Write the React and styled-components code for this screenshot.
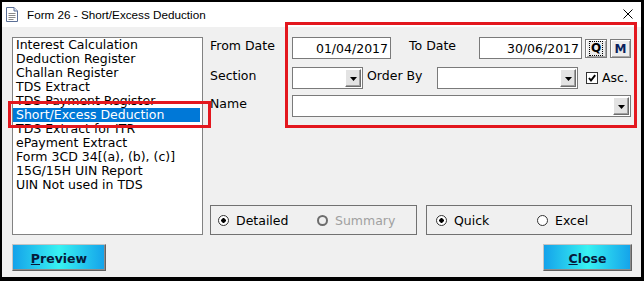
import React from "react";
import styled, { createGlobalStyle } from "styled-components";

const GlobalStyle = createGlobalStyle`
  html, body {
    margin: 0;
    padding: 0;
    background: #000;
  }
  body {
    font-family: "DejaVu Sans", Verdana, sans-serif;
    font-size: 12.5px;
    color: #000;
  }
`;

const reports = [
  "Interest Calculation",
  "Deduction Register",
  "Challan Register",
  "TDS Extract",
  "TDS Payment Register",
  "Short/Excess Deduction",
  "TDS Extract for ITR",
  "ePayment Extract",
  "Form 3CD 34[(a), (b), (c)]",
  "15G/15H UIN Report",
  "UIN Not used in TDS",
];

const DocIcon = () => (
  <svg width="12" height="15" viewBox="0 0 12 15">
    <path d="M0.5 0.5 H8 L11.5 4 V14.5 H0.5 Z" fill="#fff" stroke="#5b6f96" />
    <path d="M8 0.5 V4 H11.5" fill="#dfe6f2" stroke="#5b6f96" />
    <path d="M2.5 6.5 H9.5 M2.5 8.5 H9.5 M2.5 10.5 H9.5 M2.5 12.5 H7.5" stroke="#8a8a8a" />
  </svg>
);

const CloseIcon = () => (
  <svg width="10" height="10" viewBox="0 0 10 10">
    <path d="M0.5 0.5 L9.5 9.5 M9.5 0.5 L0.5 9.5" stroke="#000" strokeWidth="1" />
  </svg>
);

const Arrow = () => (
  <svg width="7" height="4" viewBox="0 0 7 4">
    <path d="M0 0 H7 L3.5 4 Z" fill="#000" />
  </svg>
);

const Tick = () => (
  <svg width="10" height="10" viewBox="0 0 10 10">
    <path d="M2 5 L4 7.5 L8.2 2.2" fill="none" stroke="#000" strokeWidth="2" />
  </svg>
);

export default function App() {
  return (
    <>
      <GlobalStyle />
      <Window>
        <TitleBar>
          <DocIcon />
          <Title>Form 26 - Short/Excess Deduction</Title>
          <CloseBox>
            <CloseIcon />
          </CloseBox>
        </TitleBar>

        <Body>
          <Main>
            <ReportList>
              {reports.map((r) => (
                <ReportItem key={r} $selected={r === "Short/Excess Deduction"}>
                  {r}
                </ReportItem>
              ))}
            </ReportList>

            <Options>
              <Fields>
                <FieldRow>
                  <Label $width={82}>From Date</Label>
                  <TextBox $width={99} value="01/04/2017" readOnly />
                  <Label $width={70} $gap={18}>To Date</Label>
                  <TextBox $width={103} value="30/06/2017" readOnly />
                  <SmallButton $width={22} $gap={3}>
                    <Focus>Q</Focus>
                  </SmallButton>
                  <SmallButton $width={21} $gap={3} $color="#0b1f5c">
                    M
                  </SmallButton>
                </FieldRow>

                <FieldRow $top={8}>
                  <Label $width={82}>Section</Label>
                  <Combo $width={71}>
                    <DropButton>
                      <Arrow />
                    </DropButton>
                  </Combo>
                  <Label $width={70} $gap={4}>Order By</Label>
                  <Combo $width={141}>
                    <DropButton>
                      <Arrow />
                    </DropButton>
                  </Combo>
                  <Check>
                    <Tick />
                  </Check>
                  <CheckLabel>Asc.</CheckLabel>
                </FieldRow>

                <FieldRow $top={6}>
                  <Label $width={82}>Name</Label>
                  <Combo $width={339}>
                    <DropButton>
                      <Arrow />
                    </DropButton>
                  </Combo>
                </FieldRow>
              </Fields>

              <Groups>
                <GroupBox $width={207} $pad={7}>
                  <Option $width={99}>
                    <Radio $checked />
                    Detailed
                  </Option>
                  <Option $disabled>
                    <Radio $disabled />
                    Summary
                  </Option>
                </GroupBox>
                <GroupBox $width={206} $pad={9}>
                  <Option $width={101}>
                    <Radio $checked />
                    Quick
                  </Option>
                  <Option>
                    <Radio />
                    Excel
                  </Option>
                </GroupBox>
              </Groups>
            </Options>
          </Main>

          <ButtonRow>
            <ActionButton $width={94}>
              <u>P</u>review
            </ActionButton>
            <ActionButton $width={89}>
              <u>C</u>lose
            </ActionButton>
          </ButtonRow>
        </Body>

        <Marker $left={8} $top={101} $width={203} $height={27} />
        <Marker $left={285} $top={22} $width={352} $height={106} />
      </Window>
    </>
  );
}

const Window = styled.div`
  position: relative;
  box-sizing: border-box;
  width: 644px;
  height: 281px;
  border-style: solid;
  border-color: #000;
  border-width: 2px 3px 4px 2px;
  background: #f0f0f0;
  display: flex;
  flex-direction: column;
`;

const TitleBar = styled.div`
  height: 25px;
  background: #fff;
  display: flex;
  align-items: center;
  padding-left: 4px;
`;

const Title = styled.span`
  margin-left: 9px;
  font-family: "Liberation Sans", Arial, sans-serif;
  font-size: 11.7px;
  color: #000;
`;

const CloseBox = styled.span`
  display: flex;
  margin-left: auto;
  margin-right: 8px;
  margin-top: -2px;
`;

const Body = styled.div`
  flex: 1;
  padding: 10px 9px 6px 10px;
  display: flex;
  flex-direction: column;
`;

const Main = styled.div`
  display: grid;
  grid-template-columns: 191px 1fr;
  column-gap: 7px;
  height: 198px;
`;

const ReportList = styled.div`
  box-sizing: border-box;
  border: 1px solid #828282;
  background: #fff;
  padding-right: 2px;
  overflow: hidden;
`;

const ReportItem = styled.div`
  height: 14px;
  line-height: 14px;
  padding-left: 3px;
  white-space: nowrap;
  background: ${(p) => (p.$selected ? "#0078d7" : "transparent")};
  color: ${(p) => (p.$selected ? "#fff" : "#000")};
`;

const Options = styled.div`
  display: flex;
  flex-direction: column;
  justify-content: space-between;
`;

const Fields = styled.div`
  display: flex;
  flex-direction: column;
`;

const FieldRow = styled.div`
  display: flex;
  align-items: flex-start;
  height: 22px;
  margin-top: ${(p) => p.$top || 0}px;
`;

const Label = styled.span`
  width: ${(p) => p.$width}px;
  margin-left: ${(p) => p.$gap || 0}px;
  flex-shrink: 0;
  padding-top: 2px;
  line-height: 14px;
  white-space: nowrap;
`;

const TextBox = styled.input`
  box-sizing: border-box;
  width: ${(p) => p.$width}px;
  height: 22px;
  margin: 0;
  padding: 0 2px 0 0;
  border: 1px solid #7a7a7a;
  background: #fff;
  font-family: "DejaVu Sans", Verdana, sans-serif;
  font-size: 12.5px;
  color: #000;
  text-align: right;
  outline: none;
`;

const SmallButton = styled.div`
  box-sizing: border-box;
  width: ${(p) => p.$width}px;
  height: 19px;
  margin-top: 2px;
  margin-left: ${(p) => p.$gap}px;
  border: 1px solid #7c7c7c;
  background: #ececec;
  box-shadow: inset 1px 1px #fff, inset -1px -1px #a8a8a8;
  display: flex;
  align-items: center;
  justify-content: center;
  font-weight: bold;
  font-size: 12px;
  color: ${(p) => p.$color || "#000"};
`;

const Focus = styled.span`
  outline: 1px dotted #000;
  padding: 0 1px;
  line-height: 13px;
`;

const Combo = styled.div`
  box-sizing: border-box;
  width: ${(p) => p.$width}px;
  height: 22px;
  border: 1px solid #7a7a7a;
  background: #fff;
  padding: 1px;
  display: flex;
  justify-content: flex-end;
  flex-shrink: 0;
`;

const DropButton = styled.div`
  box-sizing: border-box;
  width: 16px;
  height: 18px;
  background: #e3e3e3;
  border: 1px solid;
  border-color: #fff #6d6d6d #6d6d6d #fff;
  box-shadow: inset -1px -1px #a0a0a0;
  display: flex;
  align-items: center;
  justify-content: center;
  padding-top: 2px;
`;

const Check = styled.div`
  box-sizing: border-box;
  width: 12px;
  height: 12px;
  margin: 5px 0 0 8px;
  border: 1px solid #333;
  background: #fff;
  display: flex;
  align-items: center;
  justify-content: center;
`;

const CheckLabel = styled.span`
  margin-left: 4px;
  padding-top: 4px;
  line-height: 14px;
`;

const Groups = styled.div`
  display: flex;
  gap: 9px;
`;

const GroupBox = styled.div`
  box-sizing: border-box;
  width: ${(p) => p.$width}px;
  height: 30px;
  border: 1px solid #717171;
  padding-left: ${(p) => p.$pad}px;
  display: flex;
  align-items: center;
`;

const Option = styled.label`
  display: flex;
  align-items: center;
  gap: 7px;
  width: ${(p) => (p.$width ? `${p.$width}px` : "auto")};
  color: ${(p) => (p.$disabled ? "#a0a0a0" : "#000")};
`;

const Radio = styled.span`
  box-sizing: border-box;
  width: 11px;
  height: 11px;
  border-radius: 50%;
  border: ${(p) => (p.$disabled ? "2px solid #6d6d6d" : "1px solid #333")};
  background: ${(p) =>
    p.$checked
      ? "radial-gradient(circle, #000 0 2px, #fff 2.5px)"
      : p.$disabled
      ? "#f0f0f0"
      : "#fff"};
  flex-shrink: 0;
`;

const ButtonRow = styled.div`
  margin-top: 9px;
  display: flex;
  justify-content: space-between;
`;

const ActionButton = styled.div`
  box-sizing: border-box;
  width: ${(p) => p.$width}px;
  height: 27px;
  border: 1px solid;
  border-color: #c4c4c4 #626262 #626262 #c4c4c4;
  box-shadow: inset -1px -1px #8c8c8c;
  background: linear-gradient(to right, #14a2ea, #38f2f2 50%, #14a2ea);
  display: flex;
  align-items: center;
  justify-content: center;
  font-weight: bold;
  font-size: 12.5px;
  color: #061a3a;
  padding-top: 1px;
`;

const Marker = styled.div`
  position: absolute;
  box-sizing: border-box;
  left: ${(p) => p.$left - 2}px;
  top: ${(p) => p.$top - 2}px;
  width: ${(p) => p.$width}px;
  height: ${(p) => p.$height}px;
  border: 3px solid #e3171e;
  pointer-events: none;
`;
